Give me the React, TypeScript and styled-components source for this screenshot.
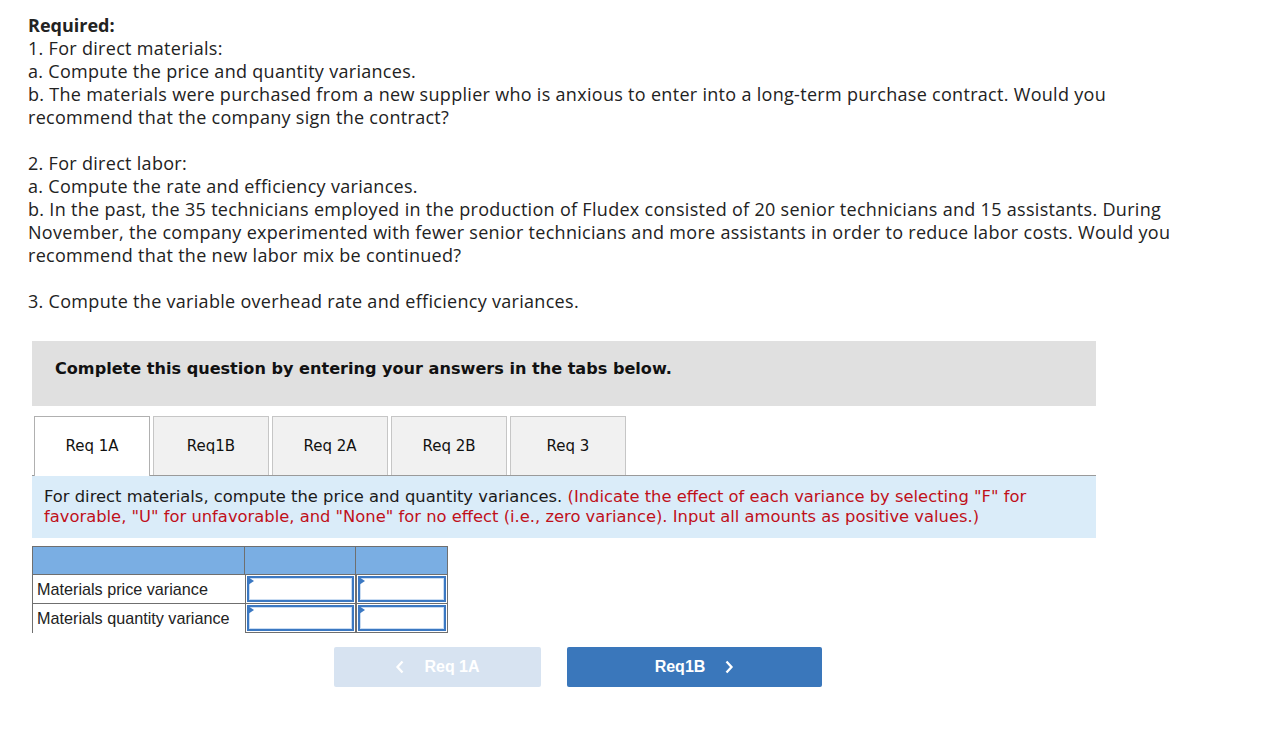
import * as React from 'react';
import styled, { createGlobalStyle } from 'styled-components';

const Global = createGlobalStyle`
  body {
    margin: 0;
    background: #ffffff;
    font-family: "Open Sans", "Liberation Sans", sans-serif;
    color: #222222;
  }
`;

const Page = styled.div`
  padding: 14px 0 0 28px;
  width: 1200px;
`;

const Intro = styled.div`
  font-size: 18px;
  letter-spacing: 0.3px;
  line-height: 23px;
  color: #222222;
`;

const Para = styled.p`
  margin: 0 0 23px 0;
`;

const Strong = styled.strong`
  font-weight: 700;
  letter-spacing: 0;
`;

const Quiz = styled.div`
  margin: 28px 0 0 4px;
  width: 1064px;
`;

const Banner = styled.div`
  background: #e0e0e0;
  height: 65px;
  box-sizing: border-box;
  display: flex;
  align-items: center;
  padding: 0 0 10px 23px;
  font-family: "DejaVu Sans", Verdana, sans-serif;
  font-weight: 700;
  font-size: 16.1px;
  color: #111111;
`;

const TabBar = styled.div`
  margin-top: 10px;
  display: flex;
  gap: 3px;
  padding-left: 2px;
  border-bottom: 1px solid #9a9a9a;
`;

const Tab = styled.div<{ $active?: boolean }>`
  width: 114px;
  height: 58px;
  display: flex;
  align-items: center;
  justify-content: center;
  border: 1px solid ${p => (p.$active ? '#b0b0b0' : '#c6c6c6')};
  border-bottom: none;
  margin-bottom: ${p => (p.$active ? '-1px' : '0')};
  padding-bottom: ${p => (p.$active ? '1px' : '0')};
  background: ${p => (p.$active ? '#ffffff' : '#f1f1f1')};
  font-family: "DejaVu Sans", Verdana, sans-serif;
  font-size: 15px;
  color: #111111;
`;

const Instruction = styled.div`
  background: #daecf9;
  padding: 11px 12px;
  font-family: "DejaVu Sans", Verdana, sans-serif;
  font-size: 16.35px;
  line-height: 20px;
  color: #1a1a1a;
`;

const Red = styled.span`
  color: #c0101a;
`;

const Table = styled.div`
  margin-top: 8px;
  display: grid;
  grid-template-columns: 213px 111px 92px;
  width: 416px;
  font-family: "Liberation Sans", Arial, sans-serif;
  font-size: 16.2px;
`;

const HeadCell = styled.div<{ $first?: boolean }>`
  background: #7aaee3;
  height: 29px;
  border: 1px solid #6f6f6f;
  border-left-width: ${p => (p.$first ? '1px' : '0')};
  box-sizing: border-box;
`;

const LabelCell = styled.div<{ $last?: boolean }>`
  height: 29px;
  display: flex;
  align-items: center;
  padding-left: 4px;
  border-left: 1px solid #6f6f6f;
  border-bottom: ${p => (p.$last ? 'none' : '1px solid #6f6f6f')};
  box-sizing: border-box;
  color: #222222;
  white-space: nowrap;
`;

const InputCell = styled.div`
  position: relative;
  height: 29px;
  box-sizing: border-box;
  border: 1px solid #6f6f6f;
  border-top: none;
  padding: 1px;
  background: #ffffff;
`;

const InputBox = styled.div`
  height: 100%;
  box-sizing: border-box;
  border: 2px solid #3b78c2;
  box-shadow: inset 0 0 0 1px #c9dcf2;
`;

const Marker = styled.div`
  position: absolute;
  top: 2px;
  left: 2px;
  width: 0;
  height: 0;
  border-top: 4px solid transparent;
  border-bottom: 4px solid transparent;
  border-left: 6px solid #3b78c2;
`;

const NavRow = styled.div`
  display: flex;
  gap: 26px;
  margin: 14px 0 0 302px;
`;

const NavButton = styled.div<{ $disabled?: boolean }>`
  width: ${p => (p.$disabled ? '207px' : '255px')};
  height: 40px;
  border-radius: 2px;
  display: flex;
  align-items: center;
  justify-content: center;
  gap: 19px;
  background: ${p => (p.$disabled ? '#d7e3f1' : '#3a77bb')};
  color: #ffffff;
  font-family: "Liberation Sans", Arial, sans-serif;
  font-weight: 700;
  font-size: 16px;
`;

const Chevron: React.FC<{ dir: 'left' | 'right' }> = ({ dir }) => (
  <svg width="10" height="14" viewBox="0 0 10 14">
    <path
      d={dir === 'left' ? 'M7.5 1.5 L2.5 7 L7.5 12.5' : 'M2.5 1.5 L7.5 7 L2.5 12.5'}
      fill="none"
      stroke="#ffffff"
      strokeWidth="2.3"
    />
  </svg>
);

const tabs = ['Req 1A', 'Req1B', 'Req 2A', 'Req 2B', 'Req 3'];
const rows = ['Materials price variance', 'Materials quantity variance'];

export default function App() {
  return (
    <>
      <Global />
      <Page>
        <Intro>
          <Para>
            <Strong>Required:</Strong>
            <br />
            1. For direct materials:
            <br />
            a. Compute the price and quantity variances.
            <br />
            b. The materials were purchased from a new supplier who is anxious to enter into a long-term purchase contract. Would you
            <br />
            recommend that the company sign the contract?
          </Para>
          <Para>
            2. For direct labor:
            <br />
            a. Compute the rate and efficiency variances.
            <br />
            b. In the past, the 35 technicians employed in the production of Fludex consisted of 20 senior technicians and 15 assistants. During
            <br />
            November, the company experimented with fewer senior technicians and more assistants in order to reduce labor costs. Would you
            <br />
            recommend that the new labor mix be continued?
          </Para>
          <Para>3. Compute the variable overhead rate and efficiency variances.</Para>
        </Intro>
        <Quiz>
          <Banner>Complete this question by entering your answers in the tabs below.</Banner>
          <TabBar>
            {tabs.map((t, i) => (
              <Tab key={t} $active={i === 0}>
                {t}
              </Tab>
            ))}
          </TabBar>
          <Instruction>
            For direct materials, compute the price and quantity variances.{' '}
            <Red>
              (Indicate the effect of each variance by selecting "F" for
              <br />
              favorable, "U" for unfavorable, and "None" for no effect (i.e., zero variance). Input all amounts as positive values.)
            </Red>
          </Instruction>
          <Table>
            <HeadCell $first />
            <HeadCell />
            <HeadCell />
            {rows.map((r, i) => (
              <React.Fragment key={r}>
                <LabelCell $last={i === rows.length - 1}>{r}</LabelCell>
                <InputCell>
                  <InputBox />
                  <Marker />
                </InputCell>
                <InputCell>
                  <InputBox />
                  <Marker />
                </InputCell>
              </React.Fragment>
            ))}
          </Table>
          <NavRow>
            <NavButton $disabled>
              <Chevron dir="left" />
              Req 1A
            </NavButton>
            <NavButton>
              Req1B
              <Chevron dir="right" />
            </NavButton>
          </NavRow>
        </Quiz>
      </Page>
    </>
  );
}
